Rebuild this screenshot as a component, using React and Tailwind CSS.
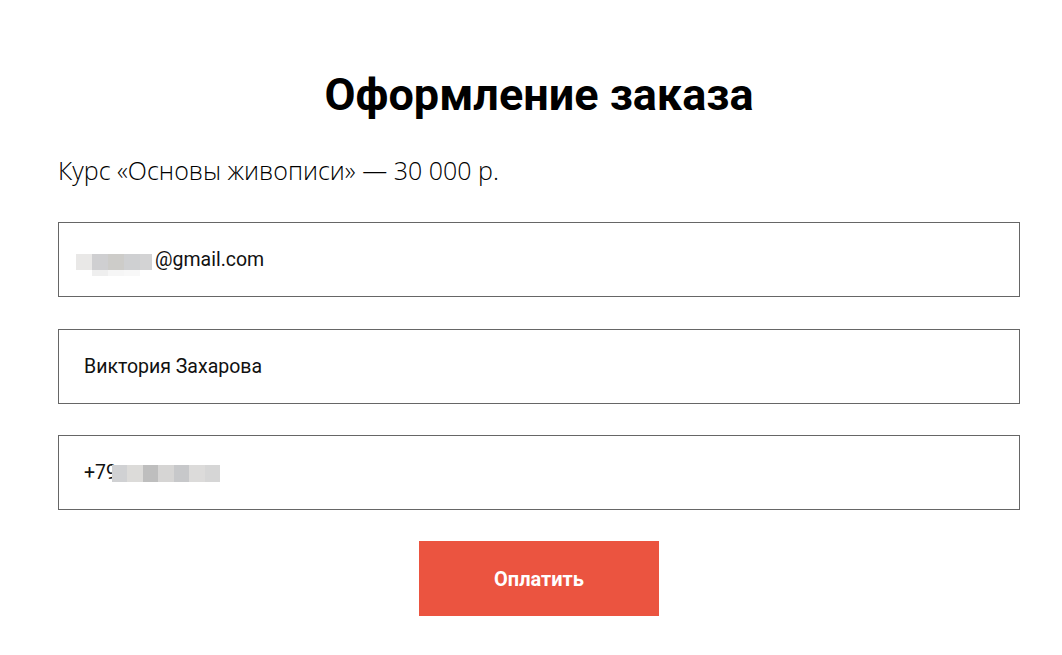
const emailBlocks = [
  { x: 0, y: 0, w: 16, h: 16, c: '#e9e8e7' },
  { x: 16, y: 0, w: 16, h: 16, c: '#cfcfd1' },
  { x: 32, y: 0, w: 16, h: 16, c: '#cdccc9' },
  { x: 48, y: 0, w: 16, h: 16, c: '#cfd0d2' },
  { x: 64, y: 0, w: 12, h: 16, c: '#d3d3d4' },
  { x: 16, y: 16, w: 16, h: 6, c: '#efefef' },
  { x: 32, y: 16, w: 16, h: 6, c: '#f6f6f6' },
  { x: 48, y: 16, w: 16, h: 6, c: '#f8f8f8' },
];

const phoneBlocks = ['#d0d1d3', '#dcdbd9', '#bebebe', '#d6d5d4', '#c7c8ca', '#dcdbda', '#d6d6d6'];

const Field = ({ children, className = '' }) => (
  <div className={`h-[75px] border border-[#666] flex items-center pl-[25px] text-[19.5px] text-[#111] font-['Roboto',sans-serif] ${className}`}>
    {children}
  </div>
);

export default function App() {
  return (
    <div className="min-h-[655px] bg-white">
      <div className="w-[962px] ml-[58px] pt-[66px]">
        <h1 className="text-center text-[45px] leading-[58px] font-bold text-black font-['Roboto',sans-serif]">
          Оформление заказа
        </h1>
        <p className="mt-[30px] text-[25px] leading-[32px] font-light text-black font-['Open_Sans',sans-serif]">
          Курс «Основы живописи» — 30 000 р.
        </p>

        <div className="mt-[36px] flex flex-col gap-[32px]">
          <div className="h-[75px] border border-[#666] flex items-center pl-[17px] text-[19.5px] text-[#111] font-['Roboto',sans-serif]">
            <span className="relative w-[76px] h-[16px] mt-[4px]">
              {emailBlocks.map((b, i) => (
                <span
                  key={i}
                  className="absolute block"
                  style={{ left: b.x, top: b.y, width: b.w, height: b.h, background: b.c }}
                />
              ))}
            </span>
            <span className="ml-[3px]">@gmail.com</span>
          </div>
          <Field>Виктория Захарова</Field>
          <Field className="-mt-[1px]">
            <span>+79</span>
            <span className="flex h-[17px] -ml-[5px] mt-[2px]">
              {phoneBlocks.map((c, i) => (
                <span key={i} className="block w-[15.5px] h-full" style={{ background: c }} />
              ))}
            </span>
          </Field>
        </div>

        <div className="flex justify-center mt-[31px]">
          <button className="w-[240px] h-[75px] bg-[#eb5440] text-white text-[20px] font-bold font-['Roboto',sans-serif]">
            Оплатить
          </button>
        </div>
      </div>
    </div>
  );
}
